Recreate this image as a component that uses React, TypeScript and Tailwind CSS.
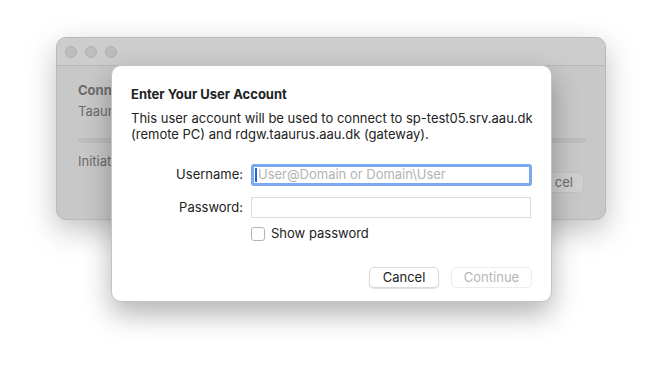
import { useState } from 'react'

const font = { fontFamily: 'Inter, "Liberation Sans", sans-serif' }

function Lights() {
  return (
    <div className="flex gap-2">
      {[0, 1, 2].map(i => (
        <span key={i} className="w-3 h-3 rounded-full bg-[#bdbdbd] border border-[#b0b0b0]" />
      ))}
    </div>
  )
}

function BackWindow() {
  return (
    <div className="ml-[56px] mt-[37px] w-[550px] h-[183px] rounded-[10px] bg-[#c8c8c8] border border-[#b9b9b9] shadow-[0_10px_30px_rgba(0,0,0,0.25)] overflow-hidden flex flex-col">
      <div className="h-[28px] shrink-0 flex items-center px-[8px] bg-[#cdcdcd] border-b border-[#b6b6b6]">
        <Lights />
      </div>
      <div className="flex-1 px-[21px] pt-[16px] text-[13px] text-[#6b6b6b]">
        {/* only the part left of the sheet shows */}
        <div className="w-[33px] overflow-hidden whitespace-nowrap">
          <p className="font-bold leading-[16px]">Connecting</p>
          <p className="leading-[16px] mt-[5px]">Taaurus</p>
        </div>
        <div className="mt-[19px] h-[5px] rounded-full bg-[#bdbdbd] w-[508px]" />
        <div className="w-[33px] overflow-hidden whitespace-nowrap">
          <p className="leading-[16px] mt-[10px]">Initiating</p>
        </div>
        <div className="flex justify-end mt-[3px]">
          <div className="w-[72px] h-[21px] rounded-[6px] bg-[#d0d0d0] border border-[#c2c2c2] flex items-center justify-end pr-[10px]">cel</div>
        </div>
      </div>
    </div>
  )
}

export default function App() {
  const [show, setShow] = useState(false)
  return (
    <div className="relative w-[662px] h-[377px] bg-white overflow-hidden" style={font}>
      <BackWindow />
      <div className="absolute left-[111px] top-[65px] w-[441px] h-[237px] bg-white rounded-[10px] border border-[#c4c4c4] shadow-[0_12px_28px_rgba(0,0,0,0.3)] text-[13px] text-[#222]">
        <div className="pl-[19px] pr-[16px] pt-[20px]">
          <h1 className="font-bold leading-[16px]">Enter Your User Account</h1>
          <p className="mt-[8px] leading-[16px]">
            This user account will be used to connect to sp-test05.srv.aau.dk (remote PC) and rdgw.taaurus.aau.dk (gateway).
          </p>
        </div>
        <div className="mt-[22px] grid grid-cols-[131px_281px] gap-x-[8px] items-center">
          <label className="text-right">Username:</label>
          <div className="h-[22px] rounded-[3px] border-[3px] border-[#7ba8ef] bg-white flex items-center pl-[1px]">
            <span className="w-[2px] h-[14px] bg-[#1a64e0]" />
            <span className="text-[#b3b3b3] ml-[1px]">User@Domain or Domain\User</span>
          </div>
          <label className="text-right mt-[11px]">Password:</label>
          <div className="mt-[11px] h-[21px] mr-[1px] border border-[#dcdcdc] bg-white" />
          <span />
          <label className="mt-[6px] flex items-center gap-[6px] cursor-default">
            <span
              onClick={() => setShow(!show)}
              className="w-[14px] h-[14px] rounded-[3px] border border-[#b5b5b5] bg-white flex items-center justify-center"
            >
              {show && <span className="text-[10px]">✓</span>}
            </span>
            <span>Show password</span>
          </label>
        </div>
        <div className="absolute right-[19px] bottom-[13px] flex gap-[12px]">
          <button className="w-[70px] h-[21px] rounded-[5px] bg-white border border-[#d9d9d9] shadow-[0_1px_1px_rgba(0,0,0,0.12)] text-[13px] text-[#222]">Cancel</button>
          <button className="w-[81px] h-[21px] rounded-[5px] bg-white border border-[#ececec] text-[13px] text-[#b5b5b5]">Continue</button>
        </div>
      </div>
    </div>
  )
}
